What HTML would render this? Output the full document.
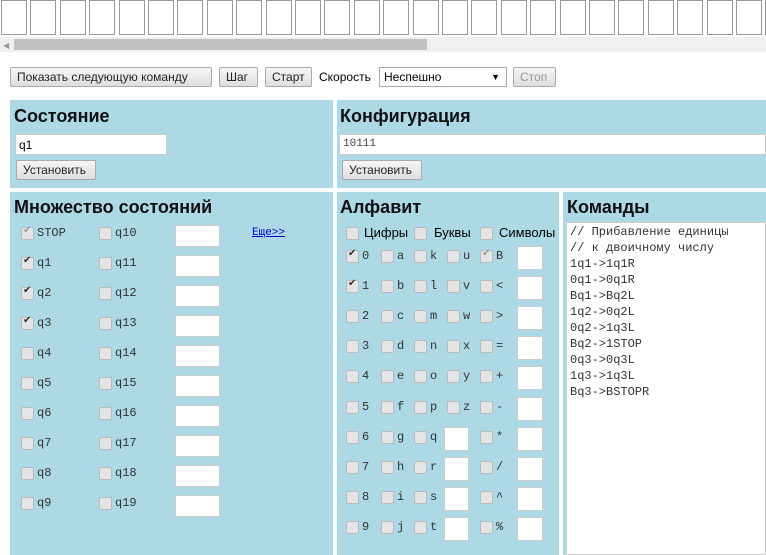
<!DOCTYPE html>
<html><head><meta charset="utf-8"><style>
body{margin:0;width:766px;height:555px;overflow:hidden;background:#fff;font-family:"Liberation Sans",sans-serif;font-size:12px;position:relative}
.a{position:absolute}
.cell{position:absolute;top:0;width:26px;height:35px;border:1px solid #999;background:#fff;box-sizing:border-box}
.btn{position:absolute;height:20px;border:1px solid #aaa;border-radius:2px;background:linear-gradient(#f6f6f6,#dedede);font-size:12px;line-height:18px;padding:0 6px;color:#222;box-sizing:border-box}
.p{position:absolute;background:#add8e6}
h2{position:absolute;margin:0;font-size:18px;font-weight:bold;color:#111}
.cb{position:absolute;width:11px;height:11px;border:1px solid #bbb;background:#e4e4e4;border-radius:2px}
.cb.c::after{content:"✔";position:absolute;left:1px;top:-3px;font-size:10px;color:#333}
.cb.d::after{content:"✔";position:absolute;left:1px;top:-3px;font-size:10px;color:#999}
.m{position:absolute;font-family:"Liberation Mono",monospace;font-size:12px;color:#333}
.in{position:absolute;background:#fff;border:1px solid #ccc;box-sizing:border-box}
</style></head><body>
<div id="tape"></div>
<div class="a" style="left:0;top:37px;width:766px;height:15px;background:#f0f0f0"></div>
<div class="a" style="left:3px;top:41px;font-size:8px;color:#999">◀</div>
<div class="a" style="left:14px;top:39px;width:413px;height:11px;background:#c1c1c1"></div>
<div class="btn" style="left:10px;top:67px;width:202px">Показать следующую команду</div>
<div class="btn" style="left:219px;top:67px;width:39px">Шаг</div>
<div class="btn" style="left:265px;top:67px;width:47px">Старт</div>
<div class="a" style="left:319px;top:70px">Скорость</div>
<div class="in" style="left:379px;top:67px;width:128px;height:20px;border-color:#aaa;padding:2px 4px">Неспешно<span style="position:absolute;right:6px;font-size:9px;top:4px">▼</span></div>
<div class="btn" style="left:513px;top:67px;width:43px;color:#999">Стоп</div>

<div class="p" style="left:10px;top:100px;width:323px;height:88px"></div>
<div class="p" style="left:337px;top:100px;width:429px;height:88px"></div>
<h2 style="left:14px;top:106px">Состояние</h2>
<h2 style="left:340px;top:106px">Конфигурация</h2>
<div class="in" style="left:15px;top:134px;width:152px;height:21px;padding:3px 3px">q1</div>
<div class="in" style="left:339px;top:134px;width:427px;height:21px;padding:3px 3px;font-family:'Liberation Mono',monospace;font-size:11px;color:#444">10111</div>
<div class="btn" style="left:16px;top:160px;width:80px">Установить</div>
<div class="btn" style="left:342px;top:160px;width:80px">Установить</div>

<div class="p" style="left:10px;top:192px;width:323px;height:363px"></div>
<div class="p" style="left:337px;top:192px;width:222px;height:363px"></div>
<div class="p" style="left:563px;top:192px;width:203px;height:363px"></div>
<h2 style="left:14px;top:197px">Множество состояний</h2>
<h2 style="left:340px;top:197px">Алфавит</h2>
<h2 style="left:567px;top:197px">Команды</h2>
<a class="a" style="left:252px;top:227px;color:#00c;font-family:'Liberation Mono',monospace;font-size:11px;text-decoration:underline">Еще&gt;&gt;</a>
<div id="st"></div>
<div class="cb" style="left:346px;top:227px"></div><div class="a" style="left:364px;top:225px;font-size:13px">Цифры</div>
<div class="cb" style="left:414px;top:227px"></div><div class="a" style="left:434px;top:225px;font-size:13px">Буквы</div>
<div class="cb" style="left:480px;top:227px"></div><div class="a" style="left:499px;top:225px;font-size:13px">Символы</div>
<div id="al"></div>
<div class="in" style="left:566px;top:222px;width:200px;height:333px;padding:1px 3px;font-family:'Liberation Mono',monospace;font-size:12px;line-height:16px;color:#333;white-space:pre">// Прибавление единицы
// к двоичному числу
1q1-&gt;1q1R
0q1-&gt;0q1R
Bq1-&gt;Bq2L
1q2-&gt;0q2L
0q2-&gt;1q3L
Bq2-&gt;1STOP
0q3-&gt;0q3L
1q3-&gt;1q3L
Bq3-&gt;BSTOPR</div>
<script>
let h='';for(let i=0;i<27;i++)h+=`<div class="cell" style="left:${Math.round(1+i*29.4)}px"></div>`;document.getElementById('tape').innerHTML=h;
h='';for(let i=0;i<10;i++){let y=233+i*30;let c=i==0?'d':(i<=3?'c':'');
h+=`<div class="cb ${c}" style="left:21px;top:${y-6}px"></div><div class="m" style="left:37px;top:${y-7}px">${i==0?'STOP':'q'+i}</div>`;
h+=`<div class="cb" style="left:99px;top:${y-6}px"></div><div class="m" style="left:115px;top:${y-7}px">q${10+i}</div>`;
h+=`<div class="in" style="left:175px;top:${y-8}px;width:45px;height:22px"></div>`;}
document.getElementById('st').innerHTML=h;
const c2='abcdefghij',c3='klmnopqrst',c4='uvwxyz',c5=['B','<','>','=','+','-','*','/','^','%'];
h='';for(let i=0;i<10;i++){let y=256+i*30.1;
h+=`<div class="cb ${i<2?'c':''}" style="left:346px;top:${y-6}px"></div><div class="m" style="left:362px;top:${y-7}px">${i}</div>`;
h+=`<div class="cb" style="left:381px;top:${y-6}px"></div><div class="m" style="left:397px;top:${y-7}px">${c2[i]}</div>`;
h+=`<div class="cb" style="left:414px;top:${y-6}px"></div>`;
if(i<6){h+=`<div class="m" style="left:430px;top:${y-7}px">${c3[i]}</div><div class="cb" style="left:447px;top:${y-6}px"></div><div class="m" style="left:463px;top:${y-7}px">${c4[i]}</div>`;}
else{h+=`<div class="m" style="left:430px;top:${y-7}px">${c3[i]}</div><div class="in" style="left:444px;top:${y-10}px;width:25px;height:24px"></div>`;}
h+=`<div class="cb ${i==0?'d':''}" style="left:480px;top:${y-6}px"></div><div class="m" style="left:496px;top:${y-7}px">${c5[i]}</div>`;
h+=`<div class="in" style="left:517px;top:${y-10}px;width:26px;height:24px"></div>`;}
document.getElementById('al').innerHTML=h;
</script>
</body></html>
